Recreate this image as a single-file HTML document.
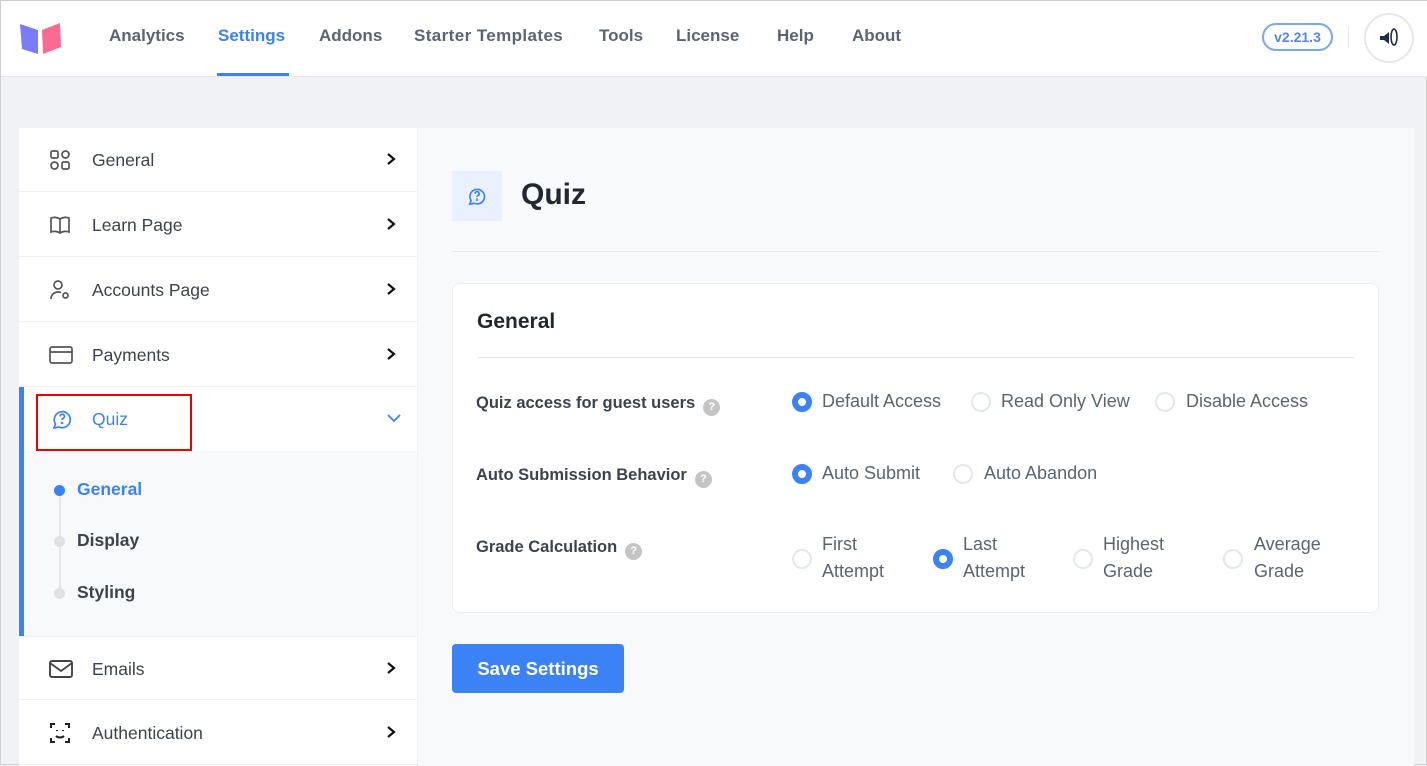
<!DOCTYPE html>
<html><head><meta charset="utf-8"><style>
*{box-sizing:border-box;margin:0;padding:0}
body{width:1427px;height:765px;overflow:hidden;background:#f0f2f5;font-family:"Liberation Sans",sans-serif;position:relative;border:1px solid #d0d0d0}
.hdr{position:absolute;left:0;top:0;width:1427px;height:76px;background:#fff;border-bottom:1px solid #e5e7eb}
.nav{position:absolute;top:25px;font-size:17px;font-weight:bold;color:#5b6472}
.nav.act{color:#3b82f6}
.ul{position:absolute;left:216px;top:72px;width:72px;height:3px;background:#3b82f6}
.ver{position:absolute;left:1261px;top:22px;width:71px;height:28px;border:2px solid #7aa5f8;border-radius:14px;color:#5b84e8;font-size:14px;font-weight:bold;text-align:center;line-height:24px}
.sep{position:absolute;left:1347px;top:25px;width:1px;height:22px;background:#e5e7eb}
.mega{position:absolute;left:1363px;top:12px;width:50px;height:50px;border:2px solid #e5e7eb;border-radius:50%}
.side{position:absolute;left:18px;top:127px;width:398px;height:638px;background:#fff}
.row{position:absolute;left:0;width:398px;height:64px;border-bottom:1px solid #eef0f3;background:#fff}
.row .t{position:absolute;left:73px;top:22px;font-size:17.5px;color:#3d434c}
.row svg.i{position:absolute;left:30px;top:21px}
.row .ch{position:absolute;left:366px;top:24px}
.sub{position:absolute;left:0;top:323px;width:398px;height:185px;background:#f8f9fb;border-left:5px solid #3b82f6}
.main{position:absolute;left:417px;top:127px;width:996px;height:638px;background:#f8f9fb}
.card{position:absolute;left:34px;top:155px;width:927px;height:330px;background:#fff;border:1px solid #eceef2;border-radius:8px}
.lbl{position:absolute;left:23px;font-size:16.5px;font-weight:bold;color:#3d434c}
.q{display:inline-block;width:17px;height:17px;border-radius:50%;background:#c4c4c4;color:#fff;font-size:11px;text-align:center;line-height:17px;margin-left:8px;vertical-align:-2px}
.r{position:absolute;width:20px;height:20px;border-radius:50%;border:2px solid #e3e7ee;background:#fff}
.r.on{border:6px solid #3b82f6}
.rt{position:absolute;font-size:18px;color:#5b6472;line-height:27px}
</style></head><body>
<div class="hdr">
<svg style="position:absolute;left:18px;top:20px" width="44" height="34" viewBox="0 0 44 34"><path d="M1 3 L19 9 L19 33 L3 28 Z" fill="#7b7cf7"/><path d="M23 9 L41 2 L42 26 L24 33 Z" fill="#fb6a90"/></svg>
<div class="nav" style="left:108px">Analytics</div>
<div class="nav act" style="left:217px">Settings</div>
<div class="nav" style="left:318px">Addons</div>
<div class="nav" style="left:413px;letter-spacing:0.4px">Starter Templates</div>
<div class="nav" style="left:598px">Tools</div>
<div class="nav" style="left:675px">License</div>
<div class="nav" style="left:776px">Help</div>
<div class="nav" style="left:851px">About</div>
<div class="ul"></div>
<div class="ver">v2.21.3</div>
<div class="sep"></div>
<div class="mega"><svg width="46" height="46" viewBox="0 0 46 46"><path d="M14 21 h4 l5-4 v12 l-5-4 h-4z" fill="#1f2d4d"/><ellipse cx="28" cy="22" rx="3" ry="8" fill="none" stroke="#1f2d4d" stroke-width="1.6"/></svg></div>
</div>
<div class="side">
<div class="row" style="top:0"><svg class="i" width="22" height="22" viewBox="0 0 22 22" fill="none" stroke="#555" stroke-width="1.7"><rect x="2" y="2" width="7" height="7" rx="1.5"/><circle cx="16.5" cy="5.5" r="3.5"/><circle cx="5.5" cy="16.5" r="3.5"/><rect x="13" y="13" width="7" height="7" rx="1.5"/></svg><div class="t">General</div><svg class="ch" width="12" height="14" viewBox="0 0 12 14"><path d="M3 2l6 5-6 5" fill="none" stroke="#111" stroke-width="2.2"/></svg></div>
<div class="row" style="top:65px"><svg class="i" width="22" height="22" viewBox="0 0 22 22" fill="none" stroke="#555" stroke-width="1.7"><path d="M11 5 C8 3 4 3 2 4 V18 C4 17 8 17 11 19 C14 17 18 17 20 18 V4 C18 3 14 3 11 5 Z M11 5 V19"/></svg><div class="t">Learn Page</div><svg class="ch" width="12" height="14" viewBox="0 0 12 14"><path d="M3 2l6 5-6 5" fill="none" stroke="#111" stroke-width="2.2"/></svg></div>
<div class="row" style="top:130px"><svg class="i" width="22" height="22" viewBox="0 0 22 22" fill="none" stroke="#555" stroke-width="1.7"><circle cx="9" cy="6" r="4"/><path d="M2 20c0-4 3-7 7-7 1.5 0 2.5.3 3 .6"/><circle cx="16.5" cy="16.5" r="2.5"/></svg><div class="t">Accounts Page</div><svg class="ch" width="12" height="14" viewBox="0 0 12 14"><path d="M3 2l6 5-6 5" fill="none" stroke="#111" stroke-width="2.2"/></svg></div>
<div class="row" style="top:195px"><svg class="i" width="24" height="22" viewBox="0 0 24 22" fill="none" stroke="#555" stroke-width="1.7"><rect x="1" y="3" width="22" height="16" rx="2"/><path d="M1 8h22"/></svg><div class="t">Payments</div><svg class="ch" width="12" height="14" viewBox="0 0 12 14"><path d="M3 2l6 5-6 5" fill="none" stroke="#111" stroke-width="2.2"/></svg></div>
<div class="row" style="top:259px;border-left:5px solid #3b82f6;border-bottom:none"><svg class="i" style="left:27px" width="22" height="22" viewBox="0 0 22 22" fill="none" stroke="#3b82f6" stroke-width="1.7"><path d="M3 20l1.5-4A8 8 0 1 1 8 19z"/><path d="M9 8.5a2.2 2.2 0 1 1 3 2c-.7.3-1 .8-1 1.5"/><circle cx="11" cy="15" r=".5"/></svg><div class="t" style="left:68px;color:#3b82f6">Quiz</div><svg class="ch" style="left:362px" width="16" height="14" viewBox="0 0 16 14"><path d="M2 4l6 6 6-6" fill="none" stroke="#3b82f6" stroke-width="1.8"/></svg></div>
<div style="position:absolute;left:17px;top:266px;width:156px;height:57px;border:2px solid #e00"></div>
<div class="sub">
<div style="position:absolute;left:35px;top:40px;width:2px;height:100px;background:#e3e5ea"></div>
<div style="position:absolute;left:30px;top:34px;width:11px;height:11px;border-radius:50%;background:#3b82f6"></div>
<div style="position:absolute;left:30px;top:85px;width:11px;height:11px;border-radius:50%;background:#dfe1e5"></div>
<div style="position:absolute;left:30px;top:137px;width:11px;height:11px;border-radius:50%;background:#dfe1e5"></div>
<div style="position:absolute;left:53px;top:28px;font-size:17.5px;font-weight:bold;color:#3b82f6">General</div>
<div style="position:absolute;left:53px;top:79px;font-size:17.5px;font-weight:bold;color:#3d434c">Display</div>
<div style="position:absolute;left:53px;top:131px;font-size:17.5px;font-weight:bold;color:#3d434c">Styling</div>
</div>
<div class="row" style="top:508px;border-top:1px solid #eef0f3"><svg class="i" width="24" height="22" viewBox="0 0 24 22" fill="none" stroke="#444" stroke-width="1.9"><rect x="1" y="3" width="22" height="16" rx="2"/><path d="M1 5l11 8 11-8"/></svg><div class="t">Emails</div><svg class="ch" width="12" height="14" viewBox="0 0 12 14"><path d="M3 2l6 5-6 5" fill="none" stroke="#111" stroke-width="2.2"/></svg></div>
<div class="row" style="top:573px"><svg class="i" width="22" height="22" viewBox="0 0 22 22" fill="none" stroke="#222" stroke-width="2"><path d="M2 6V2h4M16 2h4v4M2 16v4h4M20 16v4h-4M7 14c2 2 6 2 8 0"/><path d="M8 8v1M14 8v1"/></svg><div class="t">Authentication</div><svg class="ch" width="12" height="14" viewBox="0 0 12 14"><path d="M3 2l6 5-6 5" fill="none" stroke="#111" stroke-width="2.2"/></svg></div>
</div>
<div class="main">
<div style="position:absolute;left:34px;top:43px;width:50px;height:50px;background:#eaf1fe"><svg style="position:absolute;left:15px;top:15px" width="20" height="20" viewBox="0 0 22 22" fill="none" stroke="#3b82f6" stroke-width="1.8"><path d="M3 20l1.5-4A8 8 0 1 1 8 19z"/><path d="M9 8.5a2.2 2.2 0 1 1 3 2c-.7.3-1 .8-1 1.5"/><circle cx="11" cy="15" r=".5"/></svg></div>
<div style="position:absolute;left:103px;top:50px;font-size:30px;font-weight:bold;color:#23272f">Quiz</div>
<div style="position:absolute;left:34px;top:123px;width:927px;height:1px;background:#e6e8ec"></div>
<div class="card">
<div style="position:absolute;left:24px;top:26px;font-size:21px;font-weight:bold;color:#23272f">General</div>
<div style="position:absolute;left:25px;top:73px;width:876px;height:1px;background:#e6e8ec"></div>
<div class="lbl" style="top:110px">Quiz access for guest users<span class="q">?</span></div>
<div class="r on" style="left:339px;top:108px"></div><div class="rt" style="left:369px;top:104px">Default Access</div>
<div class="r" style="left:518px;top:108px"></div><div class="rt" style="left:548px;top:104px">Read Only View</div>
<div class="r" style="left:702px;top:108px"></div><div class="rt" style="left:733px;top:104px">Disable Access</div>
<div class="lbl" style="top:182px">Auto Submission Behavior<span class="q">?</span></div>
<div class="r on" style="left:339px;top:180px"></div><div class="rt" style="left:369px;top:176px">Auto Submit</div>
<div class="r" style="left:500px;top:180px"></div><div class="rt" style="left:531px;top:176px">Auto Abandon</div>
<div class="lbl" style="top:254px">Grade Calculation<span class="q">?</span></div>
<div class="r" style="left:339px;top:265px"></div><div class="rt" style="left:369px;top:247px">First<br>Attempt</div>
<div class="r on" style="left:480px;top:265px"></div><div class="rt" style="left:510px;top:247px">Last<br>Attempt</div>
<div class="r" style="left:620px;top:265px"></div><div class="rt" style="left:650px;top:247px">Highest<br>Grade</div>
<div class="r" style="left:770px;top:265px"></div><div class="rt" style="left:801px;top:247px">Average<br>Grade</div>
</div>
<div style="position:absolute;left:34px;top:516px;width:172px;height:49px;background:#3b82f6;border-radius:4px;color:#fff;font-size:18.5px;font-weight:bold;text-align:center;line-height:49px">Save Settings</div>
</div>
</body></html>
